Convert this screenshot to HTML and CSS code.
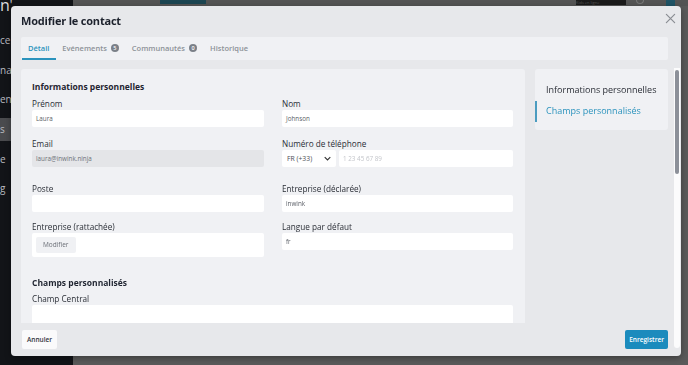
FILE: index.html
```html
<!DOCTYPE html>
<html lang="fr">
<head>
<meta charset="utf-8">
<title>Modifier le contact</title>
<link rel="stylesheet" href="styles.css">
</head>
<body>
<div class="app">
  <aside class="sidebar">
    <div class="logo">n<span class="tick">'</span></div>
    <div class="side-item">ce</div>
    <div class="side-item">na</div>
    <div class="side-item">en</div>
    <div class="side-item active">s</div>
    <div class="side-item">e</div>
    <div class="side-item">g</div>
  </aside>
  <main class="main">
    <div class="topbar">
      <span class="top-btn"></span>
      <span class="top-spacer"></span>
      <span class="top-label">Kids en ligne</span>
      <span class="top-icon"></span>
      <span class="top-avatar"></span>
    </div>
  </main>
</div>

<div class="modal">
  <header class="modal-header">
    <h1 class="modal-title">Modifier le contact</h1>
    <button class="close" aria-label="Fermer">
      <svg viewBox="0 0 12 12" width="11" height="11"><path d="M1.5 1.5 L10.5 10.5 M10.5 1.5 L1.5 10.5" stroke="#8a8d93" stroke-width="1.3" fill="none" stroke-linecap="round"/></svg>
    </button>
  </header>

  <nav class="tabs">
    <span class="tab active">Détail</span>
    <span class="tab">Evénements <span class="badge">5</span></span>
    <span class="tab">Communautés <span class="badge">0</span></span>
    <span class="tab">Historique</span>
  </nav>

  <div class="modal-body">
    <section class="panel form-panel">
      <h2 class="section-title">Informations personnelles</h2>
      <div class="grid">
        <div class="field row1">
          <label class="label">Prénom</label>
          <div class="input">Laura</div>
        </div>
        <div class="field row1">
          <label class="label">Nom</label>
          <div class="input">Johnson</div>
        </div>
        <div class="field row2">
          <label class="label">Email</label>
          <div class="input disabled">laura@inwink.ninja</div>
        </div>
        <div class="field row2">
          <label class="label">Numéro de téléphone</label>
          <div class="phone">
            <div class="input select">FR (+33)
              <svg viewBox="0 0 10 6" width="7" height="5"><path d="M1 1 L5 5 L9 1" stroke="#333" stroke-width="1.6" fill="none"/></svg>
            </div>
            <div class="input placeholder grow">1 23 45 67 89</div>
          </div>
        </div>
        <div class="field">
          <label class="label">Poste</label>
          <div class="input"></div>
        </div>
        <div class="field">
          <label class="label">Entreprise (déclarée)</label>
          <div class="input">inwink</div>
        </div>
        <div class="field">
          <label class="label">Entreprise (rattachée)</label>
          <div class="input company"><span class="mini-btn">Modifier</span></div>
        </div>
        <div class="field">
          <label class="label">Langue par défaut</label>
          <div class="input">fr</div>
        </div>
      </div>

      <h2 class="section-title second">Champs personnalisés</h2>
      <div class="field">
        <label class="label">Champ Central</label>
        <div class="input tall"></div>
      </div>
    </section>

    <aside class="panel side-nav">
      <a class="nav-link">Informations personnelles</a>
      <a class="nav-link current">Champs personnalisés</a>
    </aside>
  </div>

  <div class="scrollbar"><span class="thumb"></span></div>

  <footer class="modal-footer">
    <button class="btn">Annuler</button>
    <button class="btn primary">Enregistrer</button>
  </footer>
</div>
</body>
</html>
```

FILE: styles.css
```css
* { box-sizing: border-box; }

html, body {
  margin: 0;
  height: 100%;
  overflow: hidden;
  font-family: "Open Sans", "Noto Sans", sans-serif;
  color: #262a33;
}

.app {
  display: flex;
  height: 365px;
}

.sidebar {
  width: 73px;
  background: #121418;
  color: #c9cbd0;
  font-size: 10px;
  display: flex;
  flex-direction: column;
}

.logo {
  height: 26px;
  font-size: 16px;
  color: #d8d9dc;
  line-height: 10px;
}
.logo .tick { font-size: 12px; vertical-align: top; }

.side-item {
  height: 29.5px;
  line-height: 29px;
  color: #b9bbc0;
}
.side-item.active { background: #4a4b4e; height: 23px; line-height: 23px; margin: 3px 0 4px; }

.main {
  flex: 1;
  background: #5a5a5a;
}

.topbar {
  display: flex;
  align-items: flex-start;
  height: 6px;
  background: #545454;
}
.top-btn { margin-left: 87px; width: 46px; height: 4px; background: #1c4551; }
.top-spacer { flex: 1; }
.top-label { width: 50px; height: 5px; background: #1a1a1a; font-size: 4px; color: #555; overflow: hidden; }
.top-icon { width: 8px; height: 4px; margin: 0 22px 0 10px; border: 1px solid #777; border-top: 0; border-radius: 0 0 4px 4px; }
.top-avatar { width: 9px; height: 6px; background: #1f5365; margin-right: 13px; }

/* modal */
.modal {
  position: fixed;
  left: 11px;
  top: 6px;
  width: 670px;
  height: 350px;
  background: #e7e8eb;
  border-radius: 4px;
  box-shadow: 0 2px 6px rgba(0,0,0,.35);
  display: flex;
  flex-direction: column;
  padding: 0 13px 0 10px;
}

.modal-header {
  display: flex;
  align-items: center;
  justify-content: space-between;
  height: 31px;
  padding-bottom: 3px;
}

.modal-title {
  margin: 0;
  font-size: 11px;
  letter-spacing: -0.2px;
  font-weight: 700;
  color: #1c212c;
}

.close {
  border: 0;
  background: none;
  padding: 0;
  margin-right: -8px;
  margin-top: -3px;
  display: flex;
}

.tabs {
  display: flex;
  align-items: stretch;
  height: 23px;
  background: #f0f1f4;
  border-radius: 2px;
  padding-left: 1px;
}

.tab {
  display: flex;
  align-items: center;
  gap: 4px;
  font-size: 7.5px;
  font-weight: 600;
  color: #8d9198;
  padding: 0 7px 0 6px;
  border-bottom: 2px solid transparent;
}
.tab.active {
  color: #2b93bd;
  border-bottom-color: #2b93bd;
}

.badge {
  width: 8px;
  height: 8px;
  border-radius: 50%;
  background: #7b8088;
  color: #fff;
  font-size: 5.5px;
  display: inline-flex;
  align-items: center;
  justify-content: center;
}

.modal-body {
  flex: 1;
  display: flex;
  align-items: flex-start;
  gap: 10px;
  padding-top: 9px;
  overflow: hidden;
  min-height: 0;
}

.panel {
  background: #f0f1f4;
  border-radius: 3px;
}

.form-panel {
  width: 504px;
  padding: 11px 12px 20px 11px;
  flex-shrink: 0;
}

.section-title {
  margin: 0 0 5px;
  font-size: 8.5px;
  font-weight: 700;
  color: #1f2430;
  line-height: 13px;
}
.section-title.second { margin-top: 19px; margin-bottom: 4px; }

.grid {
  display: grid;
  grid-template-columns: 232px 231px;
  column-gap: 18px;
  row-gap: 9px;
}
.field.row1 { margin-bottom: 2px; }
.field.row2 { margin-bottom: 7px; }

.label {
  display: block;
  font-size: 8.2px;
  font-weight: 500;
  color: #2a2e36;
  line-height: 12px;
}

.input {
  height: 17px;
  background: #fff;
  border-radius: 2px;
  font-size: 6.3px;
  color: #5a5e66;
  padding: 0 4px;
  display: flex;
  align-items: center;
}
.input.disabled { background: #e4e5e8; color: #6d7178; }
.input.placeholder { color: #c3c5ca; }
.input.tall { height: 20px; }

.phone {
  display: flex;
  gap: 3px;
}
.input.select {
  width: 54px;
  justify-content: space-between;
  padding: 0 5px;
  color: #4a4e56;
  font-size: 6.8px;
}
.grow { flex: 1; }

.input.company {
  height: 24px;
  padding: 0 4px;
}
.mini-btn {
  background: #f0f1f4;
  color: #6a6e76;
  font-size: 6.5px;
  padding: 0 7px;
  height: 16px;
  line-height: 16px;
  border-radius: 2px;
}

.side-nav {
  width: 133px;
  height: 61px;
  padding-top: 15px;
  display: flex;
  flex-direction: column;
  gap: 9px;
}
.nav-link {
  font-size: 9px;
  font-weight: 500;
  color: #2a2e36;
  padding-left: 9px;
  line-height: 12px;
  border-left: 2px solid transparent;
}
.nav-link.current {
  color: #2b93bd;
  border-left-color: #4b9cc0;
  padding-top: 4px;
  padding-bottom: 5px;
  margin-top: -4px;
}

.scrollbar {
  position: absolute;
  right: 1px;
  top: 62px;
  bottom: 8px;
  width: 6px;
  background: #fbfbfc;
  border-radius: 0 0 3px 3px;
}
.thumb {
  display: block;
  margin: 2px 1px 0;
  height: 104px;
  background: #8c9099;
  border-radius: 2px;
}

.modal-footer {
  height: 33px;
  display: flex;
  align-items: flex-start;
  justify-content: space-between;
  padding-top: 7px;
}

.btn {
  height: 19px;
  border: 0;
  border-radius: 2px;
  background: #fafafb;
  font-family: inherit;
  font-size: 6.5px;
  font-weight: 600;
  color: #30343c;
  padding: 0 5px;
  margin-left: 1px;
}
.btn.primary {
  background: #1b8bbd;
  color: #fff;
  margin-left: 0;
  padding: 0 4px;
}
```
